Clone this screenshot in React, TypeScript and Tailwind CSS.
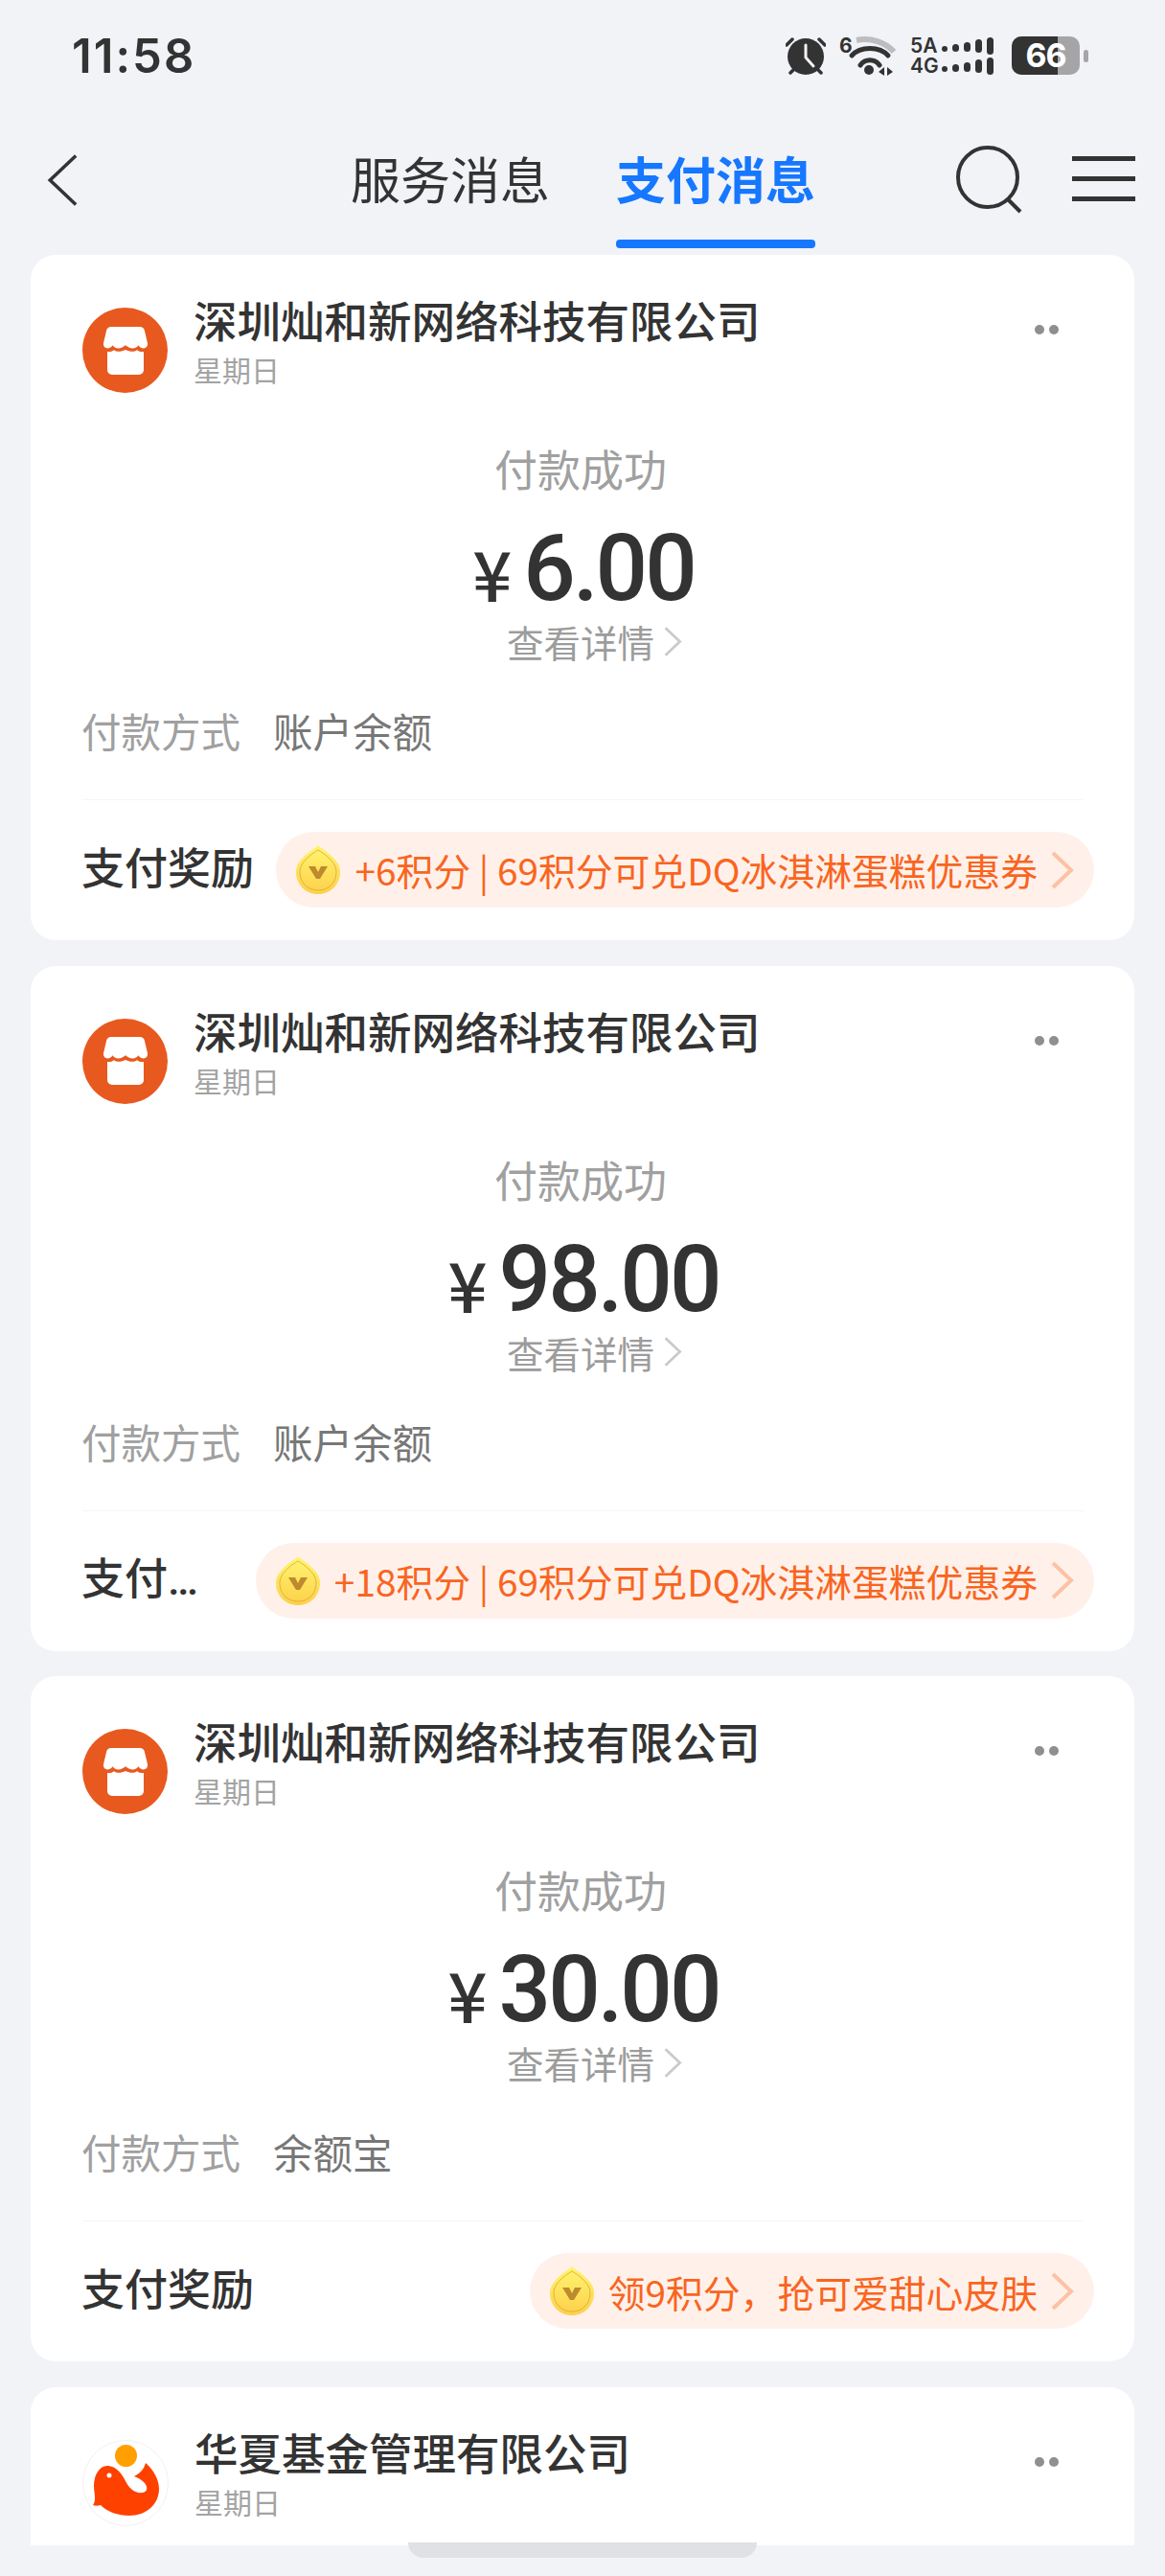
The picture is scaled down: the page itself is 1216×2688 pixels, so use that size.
const cjk = "font-['Noto_Sans_CJK_SC','Noto_Sans',sans-serif]";

interface Payment {
  amount: string;
  label: string;
  method: string;
  reward: string;
}

const payments: Payment[] = [
  { amount: "6.00", label: "支付奖励", method: "账户余额", reward: "+6积分 | 69积分可兑DQ冰淇淋蛋糕优惠券" },
  { amount: "98.00", label: "支付…", method: "账户余额", reward: "+18积分 | 69积分可兑DQ冰淇淋蛋糕优惠券" },
  { amount: "30.00", label: "支付奖励", method: "余额宝", reward: "领9积分，抢可爱甜心皮肤" },
];

function StoreLogo() {
  return (
    <div className="w-[89px] h-[89px] shrink-0 rounded-full bg-[#e8591f] flex items-center justify-center">
      <svg width="46" height="50" viewBox="0 0 46 50" fill="#fff">
        <path d="M8 0h30a5 5 0 0 1 4.800 3.600L46 17c.6 3-1.400 5.400-4 5.400-2.400 0-4.600-1.400-5.600-3.200-1 1.800-3.200 3.200-6 3.200-2.800 0-5-1.400-7.400-3.200-2.400 1.800-4.600 3.200-7.400 3.200-2.800 0-5-1.400-6-3.200C8.600 21 6.400 22.400 4 22.400c-2.600 0-4.600-2.400-4-5.400L3.200 3.600A5 5 0 0 1 8 0z" />
        <path d="M4 26c2.600.4 5.200-.4 7-1.800 3 2.200 7 2.200 12-.2 5 2.400 9 2.400 12 .2 1.800 1.400 4.400 2.200 7 1.800v19a5 5 0 0 1-5 5H9a5 5 0 0 1-5-5z" />
      </svg>
    </div>
  );
}

function FundLogo() {
  return (
    <div className="w-[90px] h-[90px] shrink-0 rounded-full bg-white border border-[#f1f1f1] flex items-center justify-center">
      <svg width="90" height="90" viewBox="5 7 90 90" className="shrink-0">
        <path d="M16 75C20 70 17 62 17 55 17 42 24 33 32 34 41 35 46 42 50 50 54 58 60 63 68 62 73 61 74 56 69 51 66 48 62 46 59 45 65 42 69 38 71 31 79 38 85 48 85 58 85 74 72 86 54 86 42 86 31 82 24 75 21 76 18 76 16 75z" fill="#ff4100" />
        <circle cx="50.500" cy="23.500" r="11.500" fill="#ffa000" />
        <circle cx="33" cy="44" r="2.500" fill="#fff" />
      </svg>
    </div>
  );
}

function Coin() {
  return (
    <svg width="46" height="51" viewBox="0 0 46 51" className="shrink-0">
      <defs>
        <linearGradient id="coin" x1="0" y1="0" x2="0" y2="1">
          <stop offset="0" stopColor="#fff570" />
          <stop offset="1" stopColor="#fdd04a" />
        </linearGradient>
      </defs>
      <path d="M23 0c3 3 8 5 14 11 6 6 9 10 9 17 0 13-10 23-23 23S0 41 0 28c0-7 3-11 9-17C15 5 20 3 23 0z" fill="url(#coin)" />
      <path d="M23 5c3 2 7 4 11 8 5 5 8 9 8 15 0 11-8 19-19 19S4 39 4 28c0-6 3-10 8-15 4-4 8-6 11-8z" fill="none" stroke="#d9a635" strokeWidth="0.800" />
      <path d="M13 22h7l3 6 3-6h7l-8 13h-4z" fill="#bd8a2e" />
    </svg>
  );
}

function Chevron({ className, stroke, width = 3, left = false }: { className: string; stroke: string; width?: number; left?: boolean }) {
  return (
    <svg viewBox="0 0 24 40" className={className} fill="none" stroke={stroke} strokeWidth={width}>
      <path d={left ? "M22 2L3 20l19 18" : "M2 2l19 18L2 38"} />
    </svg>
  );
}

function Dots() {
  return (
    <div className="flex gap-[5px] mt-[18px] mr-[37px]">
      <span className="w-[10px] h-[10px] rounded-full bg-[#8f8f8f]" />
      <span className="w-[10px] h-[10px] rounded-full bg-[#8f8f8f]" />
    </div>
  );
}

function CardHeader({ name, logo }: { name: string; logo: React.ReactNode }) {
  return (
    <div className="flex items-start h-[89px]">
      {logo}
      <div className="ml-[27px] flex-1 -mt-[17px]">
        <div className="text-[45.500px] leading-[58px] text-[#333] font-medium">{name}</div>
        <div className="text-[30px] leading-[46px] text-[#a3a3a3]">星期日</div>
      </div>
      <Dots />
    </div>
  );
}

function PaymentCard({ amount, label, method, reward }: Payment) {
  return (
    <div className="bg-white rounded-[26px] h-[715px] shrink-0 pt-[55px] pl-[54px] pr-[42px]">
      <CardHeader name="深圳灿和新网络科技有限公司" logo={<StoreLogo />} />
      <div className="text-center pr-[16px] mt-[49px] text-[45px] leading-[60px] text-[#a0a0a0]">付款成功</div>
      <div className="flex justify-center items-center pr-[10px] mt-[31px] h-[86px] text-[#333]">
        <span className="text-[72px] leading-none font-['Noto_Sans_CJK_SC',sans-serif] font-medium mr-[12px] mt-[8px]">¥</span>
        <span className="text-[96px] leading-[86px] font-['Roboto',sans-serif] font-medium tracking-[-3px]">{amount}</span>
      </div>
      <div className="flex justify-center items-center pr-[16px] mt-[10px] h-[46px] text-[38.500px] leading-[46px] text-[#9c9c9c]">
        <span>查看详情</span>
        <Chevron className="w-[19px] h-[33px] ml-[10px] -mr-[29px]" stroke="#cacaca" width={3.500} />
      </div>
      <div className="flex mt-[42px] h-[56px] text-[41.500px] leading-[56px] -ml-[1px]">
        <span className="text-[#a0a0a0]">付款方式</span>
        <span className="ml-[34px] text-[#777]">{method}</span>
      </div>
      <div className="h-[1px] bg-[#f6f6f6] mt-[44px] mr-[11px]" />
      <div className="flex items-center mt-[33px] h-[79px]">
        <span className="flex-1 whitespace-nowrap text-[45px] font-medium text-[#333] mr-[22px] -ml-[1px] font-['Roboto','Noto_Sans_CJK_SC',sans-serif]">{label}</span>
        <div className="shrink-0 h-[79px] rounded-full bg-[#fff1ea] flex items-center pl-[21px] pr-[21px]">
          <Coin />
          <span className="ml-[15px] text-[38.800px] text-[#f9651f] whitespace-nowrap">{reward}</span>
          <Chevron className="w-[24px] h-[40px] ml-[14px]" stroke="#fcc2a4" width={4} />
        </div>
      </div>
    </div>
  );
}

function StatusIcons() {
  return (
    <div className="flex items-center">
      <svg width="42" height="40" viewBox="0 0 42 40" className="mr-[14px]">
        <circle cx="21" cy="21" r="19" fill="#333" />
        <path d="M21 9v13l8 9" stroke="#f1f3f7" strokeWidth="3" fill="none" strokeLinecap="round" />
        <path d="M1 9l6-6M41 9l-6-6M5 38l4-4M37 38l-4-4" stroke="#333" strokeWidth="3.500" strokeLinecap="round" />
      </svg>
      <svg width="60" height="44" viewBox="0 0 60 44" className="mr-[14px]">
        <text x="0" y="19" fontSize="21" fontWeight="700" fill="#333" fontFamily="Inter, sans-serif">6</text>
        <path d="M18 6C33 3 48 8 57 18" stroke="#bdbdbf" strokeWidth="6" fill="none" />
        <path d="M13 22C22 12 42 12 51 22M22 32C27 25 37 25 42 32" stroke="#333" strokeWidth="5" fill="none" strokeLinecap="round" />
        <circle cx="31" cy="37" r="5" fill="#333" />
        <path d="M41 39l6-5v9zM50 34l6 5-6 4z" fill="#333" />
      </svg>
      <div className="flex flex-col gap-[3px] mr-[19px]">
        {["5A", "4G"].map((label) => (
          <div key={label} className="flex items-center h-[18px]">
            <span className="w-[31px] text-[21px] leading-none font-semibold text-[#333] font-['Inter',sans-serif]">{label}</span>
            <span className="w-[6px] h-[6px] rounded-full bg-[#333] ml-[2px] mt-[6px]" />
            <span className="w-[7px] h-[8px] rounded-full bg-[#333] ml-[5px] mt-[4px]" />
            <span className="w-[7px] h-[10px] rounded-full bg-[#333] ml-[5px] mt-[2px]" />
            <span className="w-[7px] h-[14px] rounded-full bg-[#333] ml-[5px]" />
            <span className="w-[7px] h-[18px] rounded-full bg-[#333] ml-[5px]" />
          </div>
        ))}
      </div>
      <div className="relative w-[71px] h-[40px] rounded-[10px] overflow-hidden bg-[#a5a5a8]">
        <div className="w-[48px] h-full bg-[#333]" />
        <span className="absolute inset-0 flex items-center justify-center text-[34px] leading-none font-bold text-white font-['Inter',sans-serif] tracking-[-1px]">66</span>
      </div>
      <div className="w-[5px] h-[13px] rounded-full bg-[#a5a5a8] ml-[4px]" />
    </div>
  );
}

export default function App() {
  return (
    <div className={`relative w-[1216px] h-[2688px] overflow-hidden bg-[#f1f3f7] ${cjk}`}>
      <div className="h-[116px] flex items-center justify-between pl-[75px] pr-[80px]">
        <span className="text-[49px] leading-none font-semibold text-[#333] tracking-[2px] font-['Inter',sans-serif]">11:58</span>
        <StatusIcons />
      </div>

      <div className="h-[150px] flex items-start pl-[48px] pr-[29px]">
        <Chevron left className="w-[34px] h-[62px] mt-[41px] mr-[284px] shrink-0" stroke="#333" width={2.500} />
        <div className="flex gap-[69px] shrink-0">
          <div className="h-[143px] pt-[36px] text-[52px] leading-[68px] text-[#333] whitespace-nowrap">服务消息</div>
          <div className="h-[143px] pt-[36px] text-[52px] leading-[68px] font-bold text-[#1677ff] relative whitespace-nowrap">
            支付消息
            <div className="absolute left-0 right-0 bottom-0 h-[9px] rounded-[4px] bg-[#1677ff]" />
          </div>
        </div>
        <svg width="72" height="72" viewBox="0 0 72 72" className="ml-[146px] mt-[36px] shrink-0" fill="none" stroke="#333" strokeWidth="4">
          <circle cx="34" cy="33" r="31" />
          <path d="M55 56l13 13" />
        </svg>
        <div className="ml-[50px] mt-[47px] w-[66px] flex flex-col gap-[16px] shrink-0">
          <div className="h-[5px] bg-[#333]" />
          <div className="h-[5px] bg-[#333]" />
          <div className="h-[5px] bg-[#333]" />
        </div>
      </div>

      <div className="h-[2390px] overflow-hidden px-[32px] flex flex-col gap-[26.670px]">
        {payments.map((p) => (
          <PaymentCard key={p.amount} {...p} />
        ))}
        <div className="bg-white rounded-[26px] h-[715px] shrink-0 pt-[55px] pl-[54px] pr-[42px]">
          <CardHeader name="华夏基金管理有限公司" logo={<FundLogo />} />
        </div>
      </div>

      <div className="absolute left-[426px] top-[2653px] w-[364px] h-[16px] rounded-b-full bg-[#e0e1e5]" />
    </div>
  );
}
